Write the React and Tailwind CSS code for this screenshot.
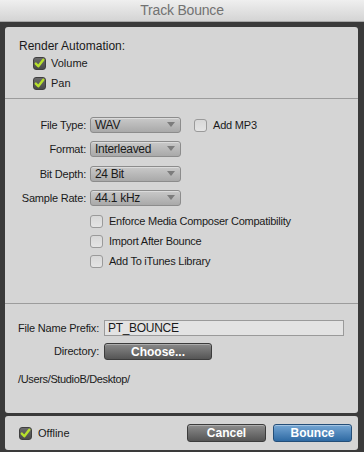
import React from "react";

const font = { fontFamily: '"Liberation Sans", Arial, sans-serif' };

function Check({ checked }) {
  if (checked) {
    return (
      <span className="inline-flex items-center justify-center w-[13px] h-[13px] rounded-[3px] border border-[#3f3f3f] bg-gradient-to-b from-[#6a6a6a] to-[#4a4a4a] shrink-0">
        <svg width="11" height="11" viewBox="0 0 11 11">
          <path d="M1.8 5.6 L4.3 8.3 L9.3 1.8" fill="none" stroke="#b6e02c" strokeWidth="2.4" strokeLinecap="round" strokeLinejoin="round" />
        </svg>
      </span>
    );
  }
  return (
    <span className="inline-block w-[13px] h-[13px] rounded-[3px] border border-[#9a9a9a] bg-gradient-to-b from-[#d8d8d8] to-[#e4e4e4] shrink-0" />
  );
}

function Dropdown({ value }) {
  return (
    <div className="relative w-[91px] h-[16px] rounded-[3px] border border-[#8c8c8c] bg-gradient-to-b from-[#c9c9c9] to-[#a9a9a9] flex items-center pl-[4px] text-[12px] tracking-[-0.3px] text-[#1a1a1a] shadow-[inset_0_1px_0_rgba(255,255,255,0.35)]">
      <span className="leading-none">{value}</span>
      <svg className="absolute right-[5px] top-[4px]" width="8" height="5" viewBox="0 0 8 5">
        <path d="M0 0 L8 0 L4 5 Z" fill="#7c7c7c" />
      </svg>
    </div>
  );
}

function Label({ children, w }) {
  return <div className={`${w} text-right text-[11px] tracking-[-0.2px] text-[#1a1a1a] leading-none`}>{children}</div>;
}

export default function App() {
  return (
    <div className="w-[364px] h-[452px] bg-[#3a3a3a] flex flex-col overflow-hidden" style={font}>
      <div className="h-[22px] bg-gradient-to-b from-[#efefef] to-[#d4d4d4] border-b border-[#a8a8a8] flex items-center justify-center text-[14px] tracking-[-0.2px] text-[#727272] shrink-0">
        Track Bounce
      </div>
      <div className="flex-1 flex flex-col pt-[5px] pl-[5px] pr-[6px] pb-[2px] gap-[3px]">
        <div className="h-[386px] bg-[#d5d5d5] rounded-[3px] flex flex-col text-[#1a1a1a]">
          {/* Section 1 */}
          <div className="h-[72px] border-b border-[#9c9c9c] pl-[14px] pt-[13px] flex flex-col">
            <div className="text-[12px] leading-none">Render Automation:</div>
            <div className="flex items-center gap-[5px] pl-[14px] mt-[5px]">
              <Check checked />
              <span className="text-[11px] leading-none">Volume</span>
            </div>
            <div className="flex items-center gap-[5px] pl-[14px] mt-[7px]">
              <Check checked />
              <span className="text-[11px] leading-none">Pan</span>
            </div>
          </div>
          {/* Section 2 */}
          <div className="h-[205px] border-b border-[#9c9c9c] pt-[18px] flex flex-col">
            <div className="flex items-center h-[16px]">
              <Label w="w-[81px]">File Type:</Label>
              <div className="ml-[4px]"><Dropdown value="WAV" /></div>
              <div className="ml-[13px] flex items-center gap-[6px]">
                <Check />
                <span className="text-[11px] tracking-[-0.2px] leading-none">Add MP3</span>
              </div>
            </div>
            <div className="flex items-center h-[16px] mt-[8px]">
              <Label w="w-[81px]">Format:</Label>
              <div className="ml-[4px]"><Dropdown value="Interleaved" /></div>
            </div>
            <div className="flex items-center h-[16px] mt-[9px]">
              <Label w="w-[81px]">Bit Depth:</Label>
              <div className="ml-[4px]"><Dropdown value="24 Bit" /></div>
            </div>
            <div className="flex items-center h-[16px] mt-[8px]">
              <Label w="w-[81px]">Sample Rate:</Label>
              <div className="ml-[4px]"><Dropdown value="44.1 kHz" /></div>
            </div>
            <div className="flex flex-col pl-[85px] mt-[9px] gap-[7px]">
              {["Enforce Media Composer Compatibility", "Import After Bounce", "Add To iTunes Library"].map((t) => (
                <div key={t} className="flex items-center gap-[6px] h-[13px]">
                  <Check />
                  <span className="text-[11px] tracking-[-0.25px] leading-none">{t}</span>
                </div>
              ))}
            </div>
          </div>
          {/* Section 3 */}
          <div className="flex-1 pt-[16px] flex flex-col">
            <div className="flex items-center h-[16px]">
              <Label w="w-[94px]">File Name Prefix:</Label>
              <div className="ml-[5px] w-[240px] h-[16px] bg-[#e3e3e3] border border-[#9a9a9a] flex items-center pl-[3px] text-[12px] tracking-[-0.3px] leading-none">
                PT_BOUNCE
              </div>
            </div>
            <div className="flex items-center h-[17px] mt-[7px]">
              <Label w="w-[94px]">Directory:</Label>
              <div className="ml-[5px] w-[108px] h-[17px] rounded-[3px] border border-[#3c3c3c] bg-gradient-to-b from-[#8a8a8a] to-[#555555] flex items-center justify-center text-white font-bold text-[12px] leading-none shadow-[inset_0_1px_0_rgba(255,255,255,0.3)]">
                Choose...
              </div>
            </div>
            <div className="pl-[13px] mt-[14px] text-[11px] tracking-[-0.35px] leading-none">/Users/StudioB/Desktop/</div>
          </div>
        </div>
        <div className="h-[34px] bg-[#d5d5d5] rounded-[3px] flex items-center pl-[14px] pr-[6px]">
          <Check checked />
          <span className="ml-[6px] text-[11px] leading-none text-[#1a1a1a]">Offline</span>
          <div className="flex-1" />
          <div className="w-[79px] h-[18px] rounded-[3px] border border-[#3c3c3c] bg-gradient-to-b from-[#8e8e8e] to-[#555555] flex items-center justify-center text-white font-bold text-[12px] leading-none shadow-[inset_0_1px_0_rgba(255,255,255,0.3)]">
            Cancel
          </div>
          <div className="ml-[7px] w-[79px] h-[18px] rounded-[3px] border border-[#244e78] bg-gradient-to-b from-[#74a6d4] to-[#2e6aa3] flex items-center justify-center text-white font-bold text-[12px] leading-none shadow-[inset_0_1px_0_rgba(255,255,255,0.35)]">
            Bounce
          </div>
        </div>
      </div>
    </div>
  );
}
